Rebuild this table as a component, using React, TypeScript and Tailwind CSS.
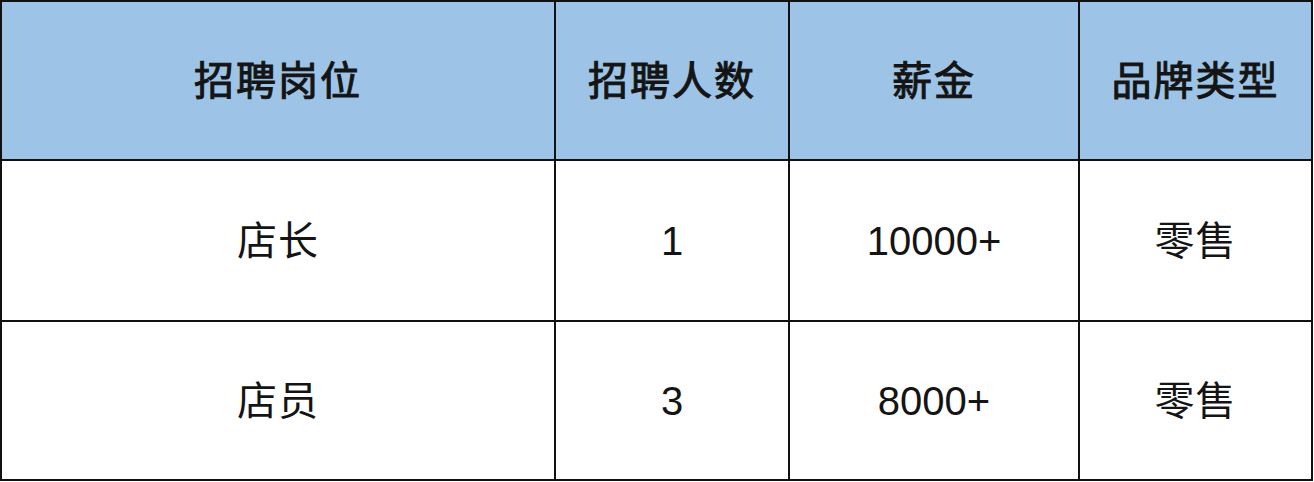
const HEAD = ["招聘岗位", "招聘人数", "薪金", "品牌类型"];

const ROWS = [
  ["店长", "1", "10000+", "零售"],
  ["店员", "3", "8000+", "零售"],
];

const COL_BORDER = ["border-r-2", "border-r-2", "border-r-2", ""];

export default function App() {
  return (
    <div className="w-[1314px] h-[482px] bg-white font-['Liberation_Sans','Noto_Sans_CJK_SC',sans-serif] text-[#141414]">
      <div className="w-[1313px] h-[481px] border-2 border-[#111] grid grid-cols-[554px_234px_290px_231px] grid-rows-[159px_161px_157px]">
        {HEAD.map((h, i) => (
          <div
            key={h}
            className={`flex items-center justify-center bg-[#9dc3e6] border-b-2 border-[#111] ${COL_BORDER[i]} text-[40px] font-normal tracking-[2px] [-webkit-text-stroke:1px_#141414]`}
          >
            {h}
          </div>
        ))}
        {ROWS.map((row, r) =>
          row.map((cell, i) => (
            <div
              key={`${r}-${i}`}
              className={`flex items-center justify-center border-[#111] ${COL_BORDER[i]} ${r === 0 ? "border-b-2" : ""} text-[40px] ${i === 0 || i === 3 ? "tracking-[1px]" : ""}`}
            >
              {cell}
            </div>
          ))
        )}
      </div>
    </div>
  );
}
